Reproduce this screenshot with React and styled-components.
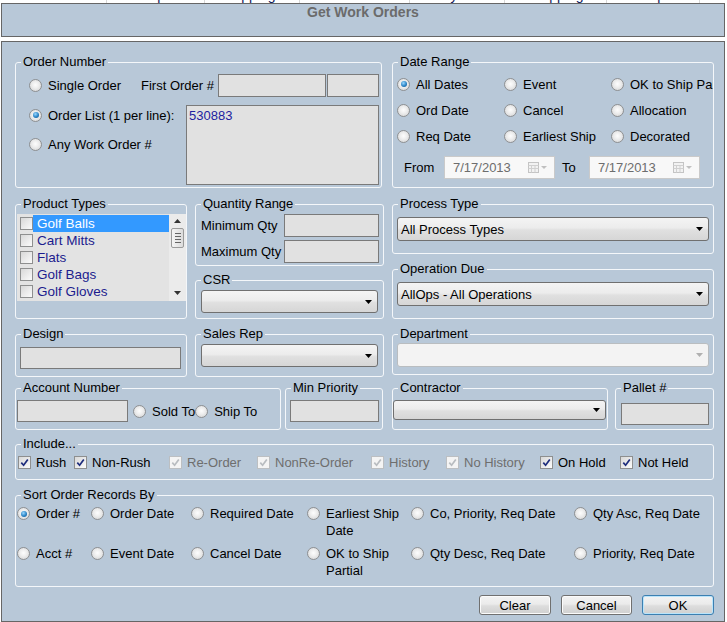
import React from 'react';
import styled, { createGlobalStyle } from 'styled-components';

const BG = '#b8c8d8';
const FONT = '"Liberation Sans", Arial, sans-serif';

const Global = createGlobalStyle`
  html, body { margin: 0; padding: 0; background: #fff; }
  body { font-family: ${FONT}; font-size: 13px; color: #000; }
  * { box-sizing: border-box; }
`;

const Page = styled.div`
  width: 727px;
  height: 622px;
  overflow: hidden;
  background: #fff;
`;

const BehindStrip = styled.div`
  height: 3px;
  overflow: hidden;
  display: flex;
  font-size: 14px;
  line-height: 14px;
  color: #102060;
`;

const BehindCell = styled.div`
  width: ${p => p.$w}px;
  flex: none;
  margin-top: -12px;
  padding-left: ${p => p.$pl || 6}px;
  border-right: 1px solid #d8d8d8;
  height: 16px;
  white-space: nowrap;
`;

const Dialog = styled.div`
  margin-left: 1px;
  width: 724px;
  display: flex;
  flex-direction: column;
  gap: 4px;
`;

const TitleBar = styled.div`
  height: 34px;
  border: 1px solid #666;
  background: ${BG};
  text-align: center;
  padding-top: 0;
  font-size: 14px;
  font-weight: bold;
  line-height: 16px;
  color: #6b6b6b;
`;

const Main = styled.div`
  border: 1px solid #666;
  background: ${BG};
  padding: 13px 10px 6px 13px;
`;

const Row = styled.div`
  display: flex;
  margin-top: ${p => p.$mt || 0}px;
`;

const ColGrid = styled.div`
  display: grid;
  grid-template-columns: 172px 189px 322px;
  column-gap: 8px;
  margin-top: ${p => p.$mt || 0}px;
`;

const Stack = styled.div`
  display: flex;
  flex-direction: column;
`;

const Group = styled.fieldset`
  margin: 0;
  margin-left: ${p => p.$ml || 0}px;
  margin-top: ${p => p.$mt || 0}px;
  padding: 0;
  min-width: 0;
  flex: none;
  width: ${p => (p.$w ? `${p.$w}px` : 'auto')};
  height: ${p => p.$h}px;
  border: 1px solid #f4f7fa;
  border-radius: 3px;
  overflow: ${p => (p.$clip ? 'hidden' : 'visible')};
`;

const Legend = styled.legend`
  padding: 0 2px;
  margin-left: 5px;
  font-size: 13px;
  line-height: 14px;
`;

const Body = styled.div`
  padding-top: ${p => p.$pt || 0}px;
  padding-left: ${p => p.$pl || 0}px;
`;

const Line = styled.div`
  display: flex;
  align-items: ${p => p.$align || 'center'};
  margin-top: ${p => p.$mt || 0}px;
`;

const FieldLabel = styled.span`
  width: ${p => p.$w}px;
  padding-left: ${p => p.$pl || 0}px;
  flex: none;
  white-space: nowrap;
  color: ${p => (p.$disabled ? '#6d6d6d' : '#000')};
`;

const Spacer = styled.span`
  width: ${p => p.$w}px;
  flex: none;
`;

const TextBox = styled.div`
  width: ${p => p.$w}px;
  height: ${p => p.$h || 22}px;
  margin-left: ${p => p.$ml || 0}px;
  flex: none;
  background: #e1e1e1;
  border: 1px solid #7a7a7a;
  padding: 2px 2px;
  color: #2222a0;
  font-size: 13px;
  line-height: 15px;
`;

const DateBox = styled.div`
  width: 111px;
  height: 23px;
  flex: none;
  background: #f8f8f8;
  border: 1px solid #cacaca;
  display: flex;
  align-items: center;
  justify-content: space-between;
  padding: 0 6px 0 8px;
  color: #6d6d6d;
`;

const SelectBox = styled.div`
  width: ${p => p.$w}px;
  height: ${p => p.$h || 23}px;
  flex: none;
  border: 1px solid ${p => (p.$disabled ? '#b9bdc0' : '#707070')};
  border-radius: 3px;
  background: ${p =>
    p.$disabled
      ? '#f3f3f3'
      : 'linear-gradient(#f4f4f4, #ececec 45%, #e0e0e0 55%, #d6d6d6)'};
  display: flex;
  align-items: center;
  justify-content: space-between;
  padding: 0 5px 0 3px;
  white-space: nowrap;
`;

const RadioItemBox = styled.label`
  display: flex;
  align-items: ${p => (p.$top ? 'flex-start' : 'center')};
  gap: 6px;
  min-height: ${p => (p.$top ? 0 : 20)}px;
  width: ${p => (p.$w ? `${p.$w}px` : 'auto')};
  flex: none;
  white-space: nowrap;
  line-height: ${p => (p.$top ? '17px' : 'normal')};
`;

const RadioCircle = styled.span`
  width: 13px;
  height: 13px;
  flex: none;
  margin-top: ${p => (p.$top ? 2 : 0)}px;
  border-radius: 50%;
  border: 1px solid #8e9092;
  background: radial-gradient(circle at 50% 45%, #fdfdfd 0%, #eeeeee 40%, #cfd0d1 100%);
  display: inline-flex;
  align-items: center;
  justify-content: center;
  &::after {
    content: '';
    display: ${p => (p.$on ? 'block' : 'none')};
    width: 6px;
    height: 6px;
    border-radius: 50%;
    background: radial-gradient(circle at 40% 35%, #9ad8ff 0%, #2a84c6 55%, #124e86 100%);
  }
`;

const CheckBoxBox = styled.span`
  width: 13px;
  height: 13px;
  flex: none;
  border: 1px solid ${p => (p.$disabled ? '#bcbfc2' : '#8e8f8f')};
  background: ${p => (p.$disabled ? '#f4f4f4' : 'linear-gradient(135deg, #d8d8d8, #fbfbfb)')};
  display: inline-flex;
  align-items: center;
  justify-content: center;
`;

const CheckItemBox = styled.label`
  display: flex;
  align-items: center;
  gap: 5px;
  white-space: nowrap;
  color: ${p => (p.$disabled ? '#6e6e6e' : '#000')};
`;

const RadioCol = styled.div`
  width: 157px;
  flex: none;
  display: flex;
  flex-direction: column;
  gap: 9px;
`;

const DateGrid = styled.div`
  display: grid;
  grid-template-columns: 107px 107px 107px;
  grid-auto-rows: 26px;
  align-items: center;
`;

const ListBox = styled.div`
  width: 169px;
  height: 87px;
  background: #e3e3e3;
  display: flex;
`;

const ListItems = styled.div`
  flex: 1;
  padding-top: 1px;
`;

const ListItem = styled.div`
  height: 17px;
  display: flex;
  align-items: center;
  padding-left: 3px;
`;

const ListText = styled.span`
  flex: 1;
  height: 17px;
  line-height: 17px;
  padding-left: 4px;
  background: ${p => (p.$sel ? '#3399ff' : 'transparent')};
  color: ${p => (p.$sel ? '#fff' : '#1c1c8e')};
  font-size: 13.5px;
`;

const ScrollBar = styled.div`
  width: 17px;
  flex: none;
  background: #ebebeb;
  display: flex;
  flex-direction: column;
  align-items: center;
  justify-content: space-between;
  padding: 5px 0 6px;
`;

const Thumb = styled.div`
  width: 13px;
  height: 20px;
  margin-top: 5px;
  margin-bottom: auto;
  border: 1px solid #9a9a9a;
  border-radius: 2px;
  background: linear-gradient(90deg, #f4f4f4, #dcdcdc);
  display: flex;
  flex-direction: column;
  justify-content: center;
  align-items: center;
  gap: 2px;
  & > i {
    display: block;
    width: 6px;
    height: 1px;
    background: #666;
  }
`;

const QtyRow = styled.div`
  display: flex;
  align-items: center;
  margin-top: ${p => p.$mt || 0}px;
`;

const IncludeGrid = styled.div`
  display: grid;
  grid-template-columns: 56px 95px 88px 114px 75px 94px 80px auto;
  height: 17px;
  align-items: center;
`;

const SortGrid = styled.div`
  display: grid;
  grid-template-columns: 74px 100px 116px 104px 163px auto;
  grid-auto-rows: 40px;
`;

const ButtonRow = styled.div`
  display: flex;
  justify-content: flex-end;
  gap: 10px;
  margin-top: 8px;
`;

const Btn = styled.button`
  width: ${p => p.$w}px;
  height: 20px;
  padding: 0;
  font-family: ${FONT};
  font-size: 13px;
  color: #000;
  border: 1px solid ${p => (p.$def ? '#3c7fb1' : '#707070')};
  border-radius: 3px;
  background: linear-gradient(#f3f3f3, #ebebeb 45%, #dddddd 55%, #d0d0d0);
  box-shadow: inset 0 0 0 1px ${p => (p.$def ? '#b9e4fb' : '#fbfbfb')};
`;

function Arrow({ color = '#000' }) {
  return (
    <svg width="7" height="4" viewBox="0 0 7 4">
      <polygon points="0,0 7,0 3.5,4" fill={color} />
    </svg>
  );
}

function Radio({ label, on, w, top }) {
  return (
    <RadioItemBox $w={w} $top={top}>
      <RadioCircle $on={on} $top={top} />
      <span>{label}</span>
    </RadioItemBox>
  );
}

function Check({ on, disabled }) {
  return (
    <CheckBoxBox $disabled={disabled}>
      {on && (
        <svg width="9" height="9" viewBox="0 0 9 9">
          <path
            d="M1.3 4.6 L3.6 7.2 L7.8 1.4"
            fill="none"
            stroke={disabled ? '#b8bcc0' : '#1d2c7c'}
            strokeWidth="1.7"
          />
        </svg>
      )}
    </CheckBoxBox>
  );
}

function CheckItem({ label, on, disabled }) {
  return (
    <CheckItemBox $disabled={disabled}>
      <Check on={on} disabled={disabled} />
      <span>{label}</span>
    </CheckItemBox>
  );
}

function CalIcon() {
  return (
    <svg width="20" height="11" viewBox="0 0 20 11">
      <rect x="0.5" y="0.5" width="10" height="10" fill="#f2f2f2" stroke="#c4c4c4" />
      <path d="M0.5 3.5 H10.5 M0.5 6.5 H10.5 M3.5 3.5 V10.5 M7 3.5 V10.5" stroke="#d0d0d0" />
      <polygon points="13,4 19,4 16,7" fill="#c0c0c0" />
    </svg>
  );
}

function DateField({ value }) {
  return (
    <DateBox>
      <span>{value}</span>
      <CalIcon />
    </DateBox>
  );
}

function Select({ w, h, value, disabled }) {
  return (
    <SelectBox $w={w} $h={h} $disabled={disabled}>
      <span>{value}</span>
      <Arrow color={disabled ? '#b0b0b0' : '#000'} />
    </SelectBox>
  );
}

const products = ['Golf Balls', 'Cart Mitts', 'Flats', 'Golf Bags', 'Golf Gloves'];

const behind = [
  { w: 107, t: 'Enroute Dt', pl: 12 },
  { w: 98, t: 'Ship Dt', pl: 30 },
  { w: 95, t: 'Shipping', pl: 16 },
  { w: 110, t: 'Rush', pl: 12 },
  { w: 95, t: 'Priority', pl: 4 },
  { w: 102, t: 'Shipping', pl: 24 },
  { w: 93, t: 'Ship Dt', pl: 30 },
  { w: 40, t: 'Acct', pl: 14 },
];

export default function App() {
  return (
    <>
      <Global />
      <Page>
        <BehindStrip>
          {behind.map(c => (
            <BehindCell key={c.t + c.w} $w={c.w} $pl={c.pl}>
              {c.t}
            </BehindCell>
          ))}
        </BehindStrip>
        <Dialog>
          <TitleBar>Get Work Orders</TitleBar>
          <Main>
            <Row>
              <Group $w={367} $h={133}>
                <Legend>Order Number</Legend>
                <Body $pt={5} $pl={13}>
                  <Line>
                    <Radio label="Single Order" w={112} />
                    <FieldLabel $w={77}>First Order #</FieldLabel>
                    <TextBox $w={108} $h={23} />
                    <TextBox $w={52} $h={23} $ml={1} />
                  </Line>
                  <Line $mt={8} $align="flex-start">
                    <RadioCol>
                      <Radio label="Order List (1 per line):" on />
                      <Radio label="Any Work Order #" />
                    </RadioCol>
                    <TextBox $w={193} $h={80}>530883</TextBox>
                  </Line>
                </Body>
              </Group>
              <Group $w={322} $h={133} $ml={10} $clip>
                <Legend>Date Range</Legend>
                <Body $pt={2} $pl={4}>
                  <DateGrid>
                    <Radio label="All Dates" on />
                    <Radio label="Event" />
                    <Radio label="OK to Ship Partial" />
                    <Radio label="Ord Date" />
                    <Radio label="Cancel" />
                    <Radio label="Allocation" />
                    <Radio label="Req Date" />
                    <Radio label="Earliest Ship" />
                    <Radio label="Decorated" />
                  </DateGrid>
                  <Line $mt={7}>
                    <FieldLabel $w={47} $pl={7}>From</FieldLabel>
                    <DateField value="7/17/2013" />
                    <FieldLabel $w={34} $pl={7}>To</FieldLabel>
                    <DateField value="7/17/2013" />
                  </Line>
                </Body>
              </Group>
            </Row>

            <ColGrid $mt={9}>
              <Stack>
                <Group $h={122}>
                  <Legend>Product Types</Legend>
                  <Body $pt={3} $pl={1}>
                    <ListBox>
                      <ListItems>
                        {products.map((p, i) => (
                          <ListItem key={p}>
                            <Check />
                            <ListText $sel={i === 0}>{p}</ListText>
                          </ListItem>
                        ))}
                      </ListItems>
                      <ScrollBar>
                        <svg width="7" height="4" viewBox="0 0 7 4">
                          <polygon points="0,4 7,4 3.5,0" fill="#333" />
                        </svg>
                        <Thumb>
                          <i />
                          <i />
                          <i />
                          <i />
                        </Thumb>
                        <Arrow color="#333" />
                      </ScrollBar>
                    </ListBox>
                  </Body>
                </Group>
                <Group $h={50} $mt={8}>
                  <Legend>Design</Legend>
                  <Body $pt={6} $pl={4}>
                    <TextBox $w={161} $h={22} />
                  </Body>
                </Group>
              </Stack>

              <Stack>
                <Group $h={69}>
                  <Legend>Quantity Range</Legend>
                  <Body $pt={3} $pl={5}>
                    <QtyRow>
                      <FieldLabel $w={83}>Minimum Qty</FieldLabel>
                      <TextBox $w={95} $h={23} />
                    </QtyRow>
                    <QtyRow $mt={3}>
                      <FieldLabel $w={83}>Maximum Qty</FieldLabel>
                      <TextBox $w={95} $h={23} />
                    </QtyRow>
                  </Body>
                </Group>
                <Group $h={46} $mt={7}>
                  <Legend>CSR</Legend>
                  <Body $pt={3} $pl={5}>
                    <Select w={177} value="" />
                  </Body>
                </Group>
                <Group $h={50} $mt={8}>
                  <Legend>Sales Rep</Legend>
                  <Body $pt={3} $pl={5}>
                    <Select w={177} value="" />
                  </Body>
                </Group>
              </Stack>

              <Stack>
                <Group $h={57}>
                  <Legend>Process Type</Legend>
                  <Body $pt={6} $pl={4}>
                    <Select w={312} h={24} value="All Process Types" />
                  </Body>
                </Group>
                <Group $h={57} $mt={8}>
                  <Legend>Operation Due</Legend>
                  <Body $pt={6} $pl={4}>
                    <Select w={312} h={24} value="AllOps - All Operations" />
                  </Body>
                </Group>
                <Group $h={48} $mt={8}>
                  <Legend>Department</Legend>
                  <Body $pt={2} $pl={4}>
                    <Select w={312} h={24} value="" disabled />
                  </Body>
                </Group>
              </Stack>
            </ColGrid>

            <Row $mt={4}>
              <Group $w={266} $h={49}>
                <Legend>Account Number</Legend>
                <Body $pt={5} $pl={1}>
                  <Line>
                    <TextBox $w={111} $h={22} />
                    <Spacer $w={5} />
                    <Radio label="Sold To" />
                    <Radio label="Ship To" />
                  </Line>
                </Body>
              </Group>
              <Group $w={98} $h={49} $ml={4}>
                <Legend>Min Priority</Legend>
                <Body $pt={5} $pl={4}>
                  <TextBox $w={89} $h={22} />
                </Body>
              </Group>
              <Group $w={216} $h={49} $ml={9}>
                <Legend>Contractor</Legend>
                <Body $pt={5} $pl={0}>
                  <Select w={213} h={20} value="" />
                </Body>
              </Group>
              <Group $w={99} $h={49} $ml={7}>
                <Legend>Pallet #</Legend>
                <Body $pt={8} $pl={5}>
                  <TextBox $w={88} $h={22} />
                </Body>
              </Group>
            </Row>

            <Row $mt={7}>
              <Group $w={699} $h={43}>
                <Legend>Include...</Legend>
                <Body $pt={3} $pl={2}>
                  <IncludeGrid>
                    <CheckItem label="Rush" on />
                    <CheckItem label="Non-Rush" on />
                    <CheckItem label="Re-Order" on disabled />
                    <CheckItem label="NonRe-Order" on disabled />
                    <CheckItem label="History" on disabled />
                    <CheckItem label="No History" on disabled />
                    <CheckItem label="On Hold" on />
                    <CheckItem label="Not Held" on />
                  </IncludeGrid>
                </Body>
              </Group>
            </Row>

            <Row $mt={8}>
              <Group $w={699} $h={99}>
                <Legend>Sort Order Records By</Legend>
                <Body $pt={3} $pl={1}>
                  <SortGrid>
                    <Radio top label="Order #" on />
                    <Radio top label="Order Date" />
                    <Radio top label="Required Date" />
                    <Radio top label={<>Earliest Ship<br />Date</>} />
                    <Radio top label="Co, Priority, Req Date" />
                    <Radio top label="Qty Asc, Req Date" />
                    <Radio top label="Acct #" />
                    <Radio top label="Event Date" />
                    <Radio top label="Cancel Date" />
                    <Radio top label={<>OK to Ship<br />Partial</>} />
                    <Radio top label="Qty Desc, Req Date" />
                    <Radio top label="Priority, Req Date" />
                  </SortGrid>
                </Body>
              </Group>
            </Row>

            <ButtonRow>
              <Btn $w={72}>Clear</Btn>
              <Btn $w={71}>Cancel</Btn>
              <Btn $w={72} $def>OK</Btn>
            </ButtonRow>
          </Main>
        </Dialog>
      </Page>
    </>
  );
}
